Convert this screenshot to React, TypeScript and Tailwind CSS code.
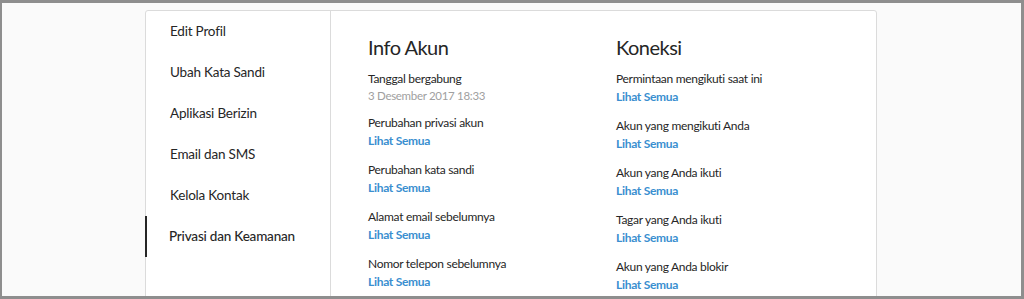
import React from "react";

const sidebar = [
  "Edit Profil",
  "Ubah Kata Sandi",
  "Aplikasi Berizin",
  "Email dan SMS",
  "Kelola Kontak",
  "Privasi dan Keamanan",
];

const info = [
  { label: "Tanggal bergabung", sub: "3 Desember 2017 18:33" },
  { label: "Perubahan privasi akun" },
  { label: "Perubahan kata sandi" },
  { label: "Alamat email sebelumnya" },
  { label: "Nomor telepon sebelumnya" },
];

const koneksi = [
  "Permintaan mengikuti saat ini",
  "Akun yang mengikuti Anda",
  "Akun yang Anda ikuti",
  "Tagar yang Anda ikuti",
  "Akun yang Anda blokir",
];

function Item({ label, sub }: { label: string; sub?: string }) {
  return (
    <div className="mb-[11px]">
      <div className="text-[12px] tracking-[-0.3px] leading-[18px] text-[#262626]">{label}</div>
      {sub ? (
        <div className="text-[11.5px] tracking-[-0.3px] leading-[15px] text-[#a0a0a0]">{sub}</div>
      ) : (
        <div className="text-[12px] tracking-[-0.3px] leading-[18px] font-bold text-[#3a8fd0]">Lihat Semua</div>
      )}
    </div>
  );
}

export default function App() {
  return (
    <div
      className="w-[1024px] h-[299px] overflow-hidden bg-[#8e8e8e] pt-[3px] pl-[2px] pr-[3px] pb-[3px]"
      style={{ fontFamily: 'Lato, "Open Sans", sans-serif' }}
    >
      <div className="h-full bg-[#fafafa] pl-[143px] pt-[7px] overflow-hidden">
        <div className="w-[732px] h-[300px] bg-white border border-[#dbdbdb] rounded-[3px] flex">
          <div className="w-[185px] shrink-0 border-r border-[#dbdbdb]">
            {sidebar.map((s, i) => (
              <div
                key={s}
                className={
                  i === sidebar.length - 1
                    ? "h-[41px] flex items-center pl-[22px] border-l-2 border-[#262626] -ml-px text-[13.5px] tracking-[-0.2px] text-[#262626] font-medium"
                    : "h-[41px] flex items-center pl-[24px] text-[13.5px] tracking-[-0.2px] text-[#262626]"
                }
              >
                {s}
              </div>
            ))}
          </div>
          <div className="flex pl-[37px] pt-[22px]">
            <div className="w-[248px]">
              <div className="text-[20px] tracking-[-0.5px] leading-[28px] text-[#262626] mb-[9px]">Info Akun</div>
              {info.map((it) => (
                <Item key={it.label} label={it.label} sub={it.sub} />
              ))}
            </div>
            <div className="w-[240px]">
              <div className="text-[20px] tracking-[-0.5px] leading-[28px] text-[#262626] mb-[9px]">Koneksi</div>
              {koneksi.map((k) => (
                <Item key={k} label={k} />
              ))}
            </div>
          </div>
        </div>
      </div>
    </div>
  );
}
